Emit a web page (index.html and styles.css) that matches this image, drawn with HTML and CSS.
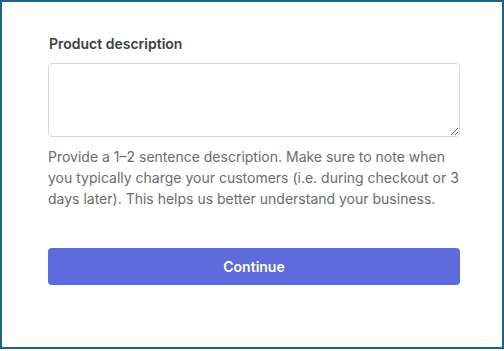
FILE: index.html
```html
<!DOCTYPE html>
<html lang="en">
<head>
  <meta charset="UTF-8" />
  <meta name="viewport" content="width=device-width, initial-scale=1.0"/>
  <title>Product description</title>
  <link rel="stylesheet" href="styles.css">
</head>
<body>
  <div class="frame">
    <form class="campo">
      <label class="rotulo" for="descricao">Product description</label>
      <textarea id="descricao" class="caixa"></textarea>
      <p class="ajuda">Provide a 1–2 sentence description. Make sure to note when you typically charge your customers (i.e. during checkout or 3 days later). This helps us better understand your business.</p>
      <button type="button" class="botao">Continue</button>
    </form>
  </div>
</body>
</html>
```

FILE: styles.css
```css
body {
  margin: 0;
  font-family: Inter, "Noto Sans", sans-serif;
  background-color: #fff;
}

.frame {
  width: 500px;
  height: 345px;
  border: 2px solid #1b6387;
  border-right-width: 3px;
  background-color: #fff;
}

.campo {
  display: flex;
  flex-direction: column;
  width: 412px;
  padding: 32px 0 0 46px;
}

.rotulo {
  font-size: 14px;
  font-weight: 600;
  line-height: 20px;
  color: #3c4043;
  padding-left: 1px;
  margin-bottom: 9px;
}

.caixa {
  box-sizing: border-box;
  width: 412px;
  height: 74px;
  margin: 0;
  border: 1px solid #d8d8d8;
  border-radius: 4px;
  resize: vertical;
  font-family: inherit;
}

.ajuda {
  margin: 9px 0 0;
  font-size: 14px;
  line-height: 21px;
  color: #6b6b6b;
}

.botao {
  margin-top: 39px;
  height: 37px;
  border: 0;
  border-radius: 4px;
  background-color: #5d6bdc;
  color: #fff;
  font-family: inherit;
  font-size: 14px;
  font-weight: 600;
  cursor: pointer;
}
```
